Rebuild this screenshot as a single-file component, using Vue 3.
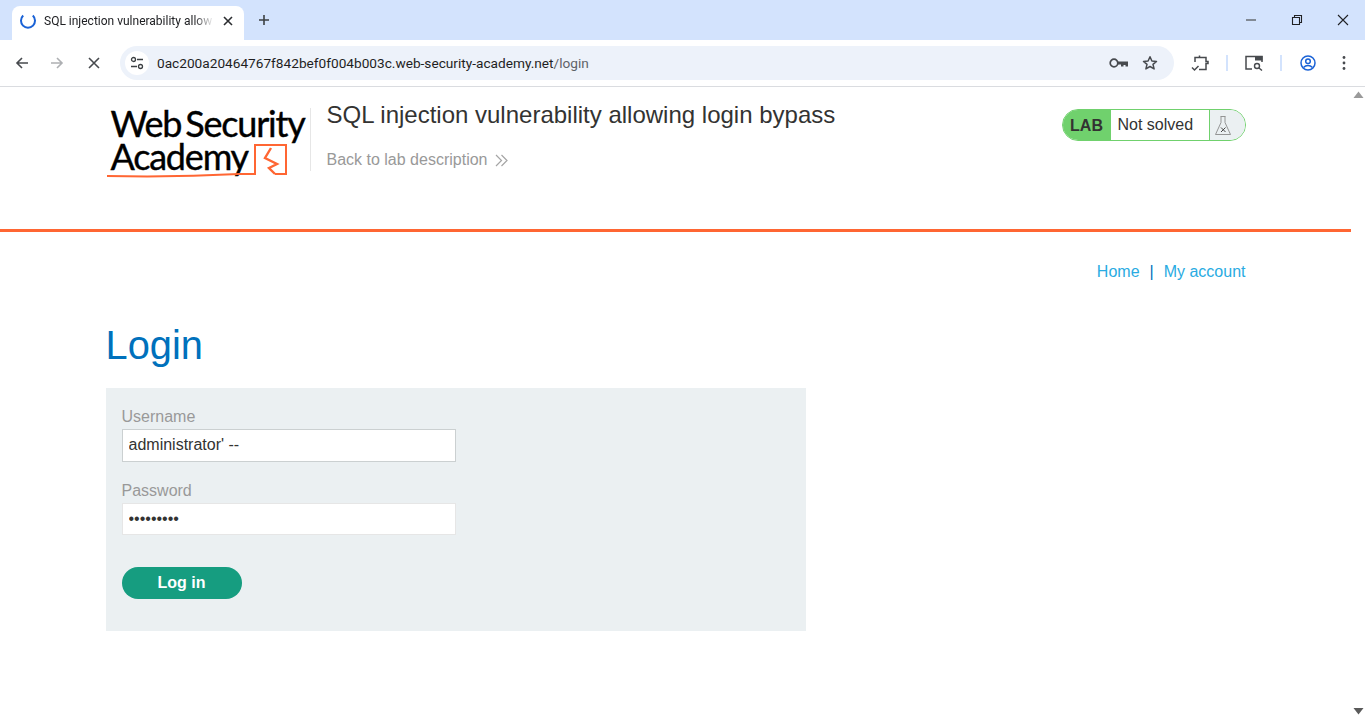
<script setup>
const username = "administrator' --";
const password = "•••••••••";
</script>

<template>
  <div class="window">
    <div class="tabstrip">
      <div class="tab">
        <svg class="spinner" width="16" height="16" viewBox="0 0 16 16"><path d="M3.200 2.600A7 7 0 1 0 12.800 2.600" fill="none" stroke="#1a62d6" stroke-width="2"/></svg>
        <span class="tab-title">SQL injection vulnerability allow</span>
        <svg class="tab-x" width="10" height="10" viewBox="0 0 10 10"><path d="M1 1l8 8M9 1l-8 8" stroke="#2b2d30" stroke-width="1.600"/></svg>
      </div>
      <svg class="new-tab" width="12" height="12" viewBox="0 0 12 12"><path d="M6 1v10M1 6h10" stroke="#3c4043" stroke-width="1.600"/></svg>
      <div class="win-controls">
        <svg width="12" height="12" viewBox="0 0 12 12"><path d="M1 6h10" stroke="#5f6368" stroke-width="1.400"/></svg>
        <svg width="12" height="12" viewBox="0 0 12 12"><path d="M1.500 3.500h7v7h-7zM3.500 3.500V1.500h7v7h-2" fill="none" stroke="#202124" stroke-width="1.100"/></svg>
        <svg width="12" height="12" viewBox="0 0 12 12"><path d="M1 1l10 10M11 1L1 11" stroke="#202124" stroke-width="1.100"/></svg>
      </div>
    </div>

    <div class="toolbar">
      <svg class="nav-icon" width="16" height="16" viewBox="0 0 16 16"><path d="M14 8H3M8 3L3 8l5 5" fill="none" stroke="#474a4e" stroke-width="1.600"/></svg>
      <svg class="nav-icon" width="16" height="16" viewBox="0 0 16 16"><path d="M2 8h11M8 3l5 5-5 5" fill="none" stroke="#aeb0b3" stroke-width="1.600"/></svg>
      <svg class="nav-icon" width="16" height="16" viewBox="0 0 16 16"><path d="M3 3l10 10M13 3L3 13" stroke="#474a4e" stroke-width="1.600"/></svg>
      <div class="omnibox">
        <span class="site-icon">
          <svg width="14" height="14" viewBox="0 0 14 14"><circle cx="3.500" cy="3.500" r="2" fill="none" stroke="#3c4043" stroke-width="1.300"/><path d="M7 3.500h6M1 10.500h6" stroke="#3c4043" stroke-width="1.300"/><circle cx="10.500" cy="10.500" r="2" fill="none" stroke="#3c4043" stroke-width="1.300"/></svg>
        </span>
        <span class="url"><span class="host">0ac200a20464767f842bef0f004b003c.web-security-academy.net</span><span class="path">/login</span></span>
        <svg class="key" width="20" height="12" viewBox="0 0 20 12"><circle cx="5" cy="6" r="3.800" fill="none" stroke="#474a4e" stroke-width="1.700"/><path d="M9 4.500h10v5h-2.500V8h-2v1.500h-2.500V7.500H9z" fill="#474a4e"/></svg>
        <svg class="star" width="16" height="16" viewBox="0 0 16 16"><path d="M8 1.700l1.900 4.300 4.600.4-3.500 3 1.100 4.500L8 11.500l-4.100 2.400L5 9.400l-3.500-3 4.600-.4z" fill="none" stroke="#474a4e" stroke-width="1.500" stroke-linejoin="round"/></svg>
      </div>
      <div class="tools">
        <svg class="ext" width="18" height="18" viewBox="0 0 18 18"><path d="M4 8V3.500h4.500V1.500M8.500 3.500H15V7.500h2v2h-2V15.500H8" fill="none" stroke="#474a4e" stroke-width="1.500"/><path d="M1 13.500l2.500 2.500L7.500 12" fill="none" stroke="#474a4e" stroke-width="1.500"/></svg>
        <i class="sep"></i>
        <svg class="panel" width="18" height="16" viewBox="0 0 18 16"><path d="M7 14H1V1.500h16V7" fill="none" stroke="#474a4e" stroke-width="1.500"/><path d="M10 1h7.500v4.500H10z" fill="#474a4e"/><circle cx="12" cy="11" r="2.500" fill="none" stroke="#474a4e" stroke-width="1.400"/><path d="M14 13l3 2.500" stroke="#474a4e" stroke-width="1.400"/></svg>
        <i class="sep"></i>
        <svg class="profile" width="16" height="16" viewBox="0 0 16 16"><circle cx="8" cy="8" r="7" fill="none" stroke="#1a62d6" stroke-width="1.500"/><circle cx="8" cy="6.300" r="2.300" fill="none" stroke="#1a62d6" stroke-width="1.500"/><path d="M3.500 12.500c2.500-2.600 6.500-2.600 9 0" fill="none" stroke="#1a62d6" stroke-width="1.500"/></svg>
        <svg class="dots" width="4" height="16" viewBox="0 0 4 16"><circle cx="2" cy="2.500" r="1.400" fill="#474a4e"/><circle cx="2" cy="8" r="1.400" fill="#474a4e"/><circle cx="2" cy="13.500" r="1.400" fill="#474a4e"/></svg>
      </div>
    </div>

    <div class="viewport">
      <div class="page">
        <header class="lab-header">
          <div class="header-inner">
            <div class="logo">
              <div class="logo-line">Web Security</div>
              <div class="logo-line">Academy</div>
              <svg class="logo-art" width="184" height="42" viewBox="0 0 184 42">
                <path d="M1 36c45 1 95 0 132-2h16V5h31v29h-11" fill="none" stroke="#ff6633" stroke-width="2"/>
                <path d="M165 8l-6 10 12 6-8 4 6 6" fill="none" stroke="#ff6633" stroke-width="2.400"/>
              </svg>
            </div>
            <div class="title-block">
              <h2>SQL injection vulnerability allowing login bypass</h2>
              <a class="back">Back to lab description
                <svg width="13" height="13" viewBox="0 0 13 13"><path d="M1 1l5.500 5.500L1 12M6.500 1L12 6.500 6.500 12" fill="none" stroke="#a5a5a5" stroke-width="1.200"/></svg>
              </a>
            </div>
            <div class="status">
              <span class="lab">LAB</span>
              <span class="state">Not solved</span>
              <span class="flask">
                <svg width="18" height="24" viewBox="0 0 18 24"><path d="M6.500 3.500h5M7 3.500v6L1.500 21.500h15L11 9.500v-6" fill="none" stroke="#8a8a8a" stroke-width=".9"/><path d="M7 14.500l4.500 4.500M11.500 14.500L7 19" stroke="#444" stroke-width="1"/></svg>
              </span>
            </div>
          </div>
        </header>

        <main class="container">
          <nav class="nav"><a>Home</a><span class="pipe">|</span><a>My account</a></nav>
          <h1>Login</h1>
          <form class="login" @submit.prevent>
            <label>Username</label>
            <input class="focused" type="text" :value="username" />
            <label class="second-label">Password</label>
            <input type="text" :value="password" class="pw" />
            <button type="submit">Log in</button>
          </form>
        </main>
      </div>
      <div class="scrollbar">
        <svg width="15" height="15" viewBox="0 0 15 15"><path d="M2.500 11l5-6.500 5 6.500z" fill="#9a9a9a"/></svg>
        <svg width="15" height="15" viewBox="0 0 15 15"><path d="M2.500 4l5 6.500 5-6.500z" fill="#5a5a5a"/></svg>
      </div>
    </div>
  </div>
</template>

<style>
html, body { margin: 0; height: 100%; overflow: hidden; background: #fff; }
</style>

<style scoped>
.window { width: 1365px; height: 719px; display: flex; flex-direction: column; font-family: "Liberation Sans", Arial, sans-serif; overflow: hidden; }
.tabstrip { height: 40px; flex: none; background: #d3e3fd; display: flex; align-items: flex-start; }
.tab { width: 232px; height: 34px; margin: 6px 0 0 12px; background: #fff; border-radius: 8px 8px 0 0; display: flex; align-items: center; box-sizing: border-box; padding: 0 0 4px 8px; }
.spinner { flex: none; }
.tab-title { width: 170px; margin-left: 8px; font: 12px "Roboto", sans-serif; color: #202124; white-space: nowrap; overflow: hidden; -webkit-mask-image: linear-gradient(90deg, #000 88%, transparent); mask-image: linear-gradient(90deg, #000 88%, transparent); }
.tab-x { margin-left: 9px; flex: none; }
.new-tab { margin: 14px 0 0 14px; }
.win-controls { margin-left: auto; display: flex; gap: 34px; padding: 14px 16px 0 0; }
.toolbar { height: 46px; flex: none; background: #fff; border-bottom: 1px solid #dadce0; display: flex; align-items: center; padding-left: 14px; }
.nav-icon { flex: none; margin-right: 19px; }
.nav-icon:nth-child(2) { margin-right: 21px; }
.nav-icon:nth-child(3) { margin-right: 18px; }
.omnibox { width: 1054px; height: 34px; border-radius: 17px; background: #edf2fa; display: flex; align-items: center; box-sizing: border-box; padding: 0 16px 0 5px; flex: none; }
.site-icon { width: 24px; height: 24px; border-radius: 50%; background: #fff; display: flex; align-items: center; justify-content: center; flex: none; }
.url { margin-left: 7px; font: 13.670px "Roboto", sans-serif; flex: 1; white-space: nowrap; padding-left: 1px; }
.host { color: #1f1f1f; }
.path { color: #5f6368; }
.star { margin-left: 13px; }
.tools { display: flex; align-items: center; margin-left: 17px; }
.ext { margin-right: 17px; }
.sep { width: 2px; height: 16px; background: #d3e3fd; display: block; flex: none; }
.panel { margin: 0 17px; }
.profile { margin: 0 0 0 18px; }
.dots { margin: 0 0 0 26px; }
.viewport { flex: 1; display: flex; min-height: 0; }
.page { flex: 1; min-width: 0; color: #333332; }
.scrollbar { width: 14px; background: #fff; display: flex; flex-direction: column; justify-content: space-between; align-items: center; }
.lab-header { height: 142px; border-bottom: 3px solid #ff6633; }
.header-inner { width: 1140px; margin: 0 auto; display: flex; padding-top: 21px; height: 122px; box-sizing: border-box; position: relative; }
.logo { width: 205px; height: 63px; flex: none; position: relative; border-right: 1px solid #e6e6e6; box-sizing: border-box; font-family: "Lato", sans-serif; color: #000; font-size: 36px; font-weight: 400; letter-spacing: -1.2px; word-spacing: -4px; white-space: nowrap; padding-left: 5px; -webkit-text-stroke: 0.4px #000; }
.logo-line { height: 33px; line-height: 31px; }
.logo-art { position: absolute; left: 0; top: 32px; }
.title-block { margin-left: 16px; flex: 1; margin-top: -8px; }
h2 { margin: 0; font-size: 24px; line-height: 29px; font-weight: 400; color: #333332; }
.back { display: flex; align-items: center; gap: 8px; margin-top: 22px; font-size: 16px; line-height: 18px; color: #999; }
.status { width: 184px; height: 32px; border: 1px solid #70d16d; border-radius: 16px; box-sizing: border-box; display: flex; overflow: hidden; position: absolute; right: 0; top: 22px; background: #fff; }
.lab { width: 48px; background: #70d16d; font-weight: 700; font-size: 16px; line-height: 31px; text-align: center; color: #333332; box-sizing: border-box; }
.state { width: 98px; font-size: 16px; line-height: 29px; padding-left: 7px; box-sizing: border-box; color: #333332; }
.flask { flex: 1; border-left: 1px solid #70d16d; background: #ebf0f2; display: flex; align-items: center; padding-left: 4px; }
.container { width: 1140px; margin: 0 auto; }
.nav { display: flex; justify-content: flex-end; margin-top: 30px; font-size: 16px; line-height: 20px; color: #29abe2; }
.nav .pipe { color: #0071bc; margin: 0 10px; }
h1 { margin: 40px 0 0; font-size: 39.800px; line-height: 46px; font-weight: 400; color: #0071bc; }
.login { width: 700px; height: 243px; margin-top: 20px; background: #ebf0f2; box-sizing: border-box; padding: 20px 16px 0; display: flex; flex-direction: column; align-items: flex-start; }
label { font-size: 16px; line-height: 18px; color: #999; }
.second-label { margin-top: 20px; }
input { width: 334px; height: 33px; margin-top: 3px; box-sizing: border-box; border: 1px solid #cbd0d1; background: #fff; padding: 0 6px 2px; font: 16px "Liberation Sans", sans-serif; color: #333332; outline: none; }
input.pw { height: 32px; margin-top: 3px; border-color: #e6e6e6; padding: 0 6px; }
button { width: 120px; height: 32px; margin-top: 32px; border: 0; border-radius: 16px; background: #169d80; color: #fff; font: 700 16px "Liberation Sans", sans-serif; padding: 0 0 1px; }
</style>
